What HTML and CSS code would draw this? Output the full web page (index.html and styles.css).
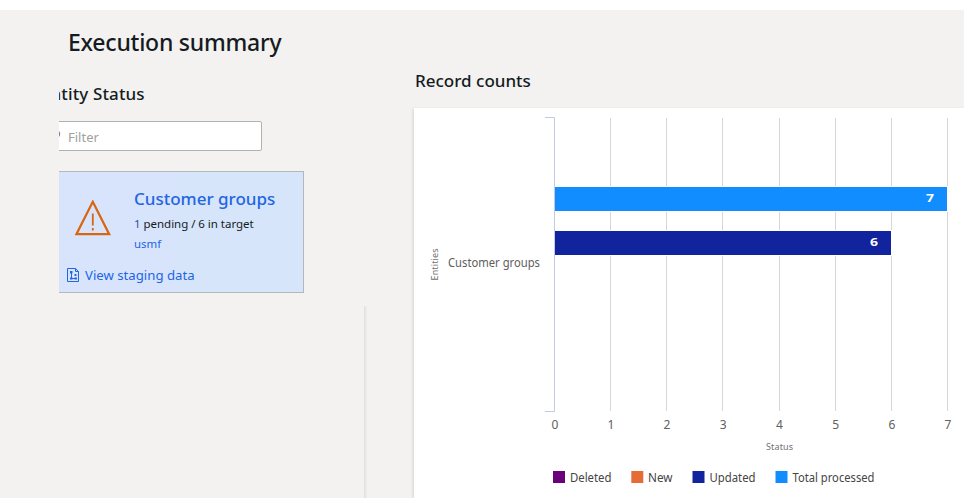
FILE: index.html
```html
<!DOCTYPE html>
<html lang="en">
<head>
<meta charset="utf-8">
<title>Execution summary</title>
<link rel="stylesheet" href="styles.css">
</head>
<body>
<main class="page">
  <section class="summary">
    <h1 class="title">Execution summary</h1>
    <div class="entities">
      <h2 class="heading entity-heading">Entity Status</h2>
      <div class="filter">
        <svg class="search" width="12" height="12" viewBox="0 0 12 12"><circle cx="7.3" cy="3" r="3.5"/><path d="M4.8 5.5L1 9"/></svg>
        <span>Filter</span>
      </div>
      <article class="card">
        <div class="card-main">
          <svg class="warning" width="36" height="36" viewBox="0 0 36 36">
            <path class="triangle" d="M17.8 1.8L1.4 34.2H34.2Z"/>
            <path class="mark" d="M17.8 13.5V25.5M17.8 28V30.5"/>
          </svg>
          <div class="card-text">
            <h3 class="card-title">Customer groups</h3>
            <p class="counts"><span class="pending">1</span> pending / 6 in target</p>
            <p class="company">usmf</p>
          </div>
        </div>
        <a class="staging">
          <svg width="13" height="14" viewBox="0 0 13 14"><path class="doc" d="M.5.5H8.5L11.5 3.5V13.5H.5ZM8.5.5V3.5H11.5"/><path class="doc" d="M4.5 5V10.5H8.5"/><path class="dots" d="M3 3H5.5V5.5H3ZM3 9.5H5.5V11.5H3ZM7.5 9.5H10V11.5H7.5ZM7.5 6H9.5V8H7.5Z"/></svg>
          <span>View staging data</span>
        </a>
      </article>
    </div>
    <div class="splitter"></div>
  </section>
  <section class="records">
    <h2 class="heading record-heading">Record counts</h2>
    <div class="chart">
      <svg width="550" height="390" viewBox="414 108 550 390">
        <path class="grid" d="M610.5 118V411M666.5 118V411M722.5 118V411M779.5 118V411M835.5 118V411M891.5 118V411M947.5 118V411"/>
        <path class="axis" d="M545 117.5H554.5V411.5H545"/>
        <g class="bars">
          <rect x="554" y="186" width="394" height="26" fill="#fff"/>
          <rect x="554" y="230" width="338" height="26" fill="#fff"/>
          <path class="axis" d="M554.5 185V257"/>
          <rect x="555" y="187" width="392" height="24" fill="#118dff"/>
          <rect x="555" y="231" width="336" height="24" fill="#12239e"/>
        </g>
        <g class="values">
          <text x="926" y="202" textLength="8" lengthAdjust="spacingAndGlyphs">7</text>
          <text x="870" y="246" textLength="8" lengthAdjust="spacingAndGlyphs">6</text>
        </g>
        <text class="label" x="448" y="267" textLength="92" lengthAdjust="spacingAndGlyphs">Customer groups</text>
        <text class="axis-title" transform="translate(438 280.5) rotate(-90)" textLength="32">Entities</text>
        <g class="ticks">
          <text x="555" y="429">0</text><text x="611" y="429">1</text><text x="667" y="429">2</text><text x="723.3" y="429">3</text>
          <text x="779.5" y="429">4</text><text x="835.7" y="429">5</text><text x="892" y="429">6</text><text x="948" y="429">7</text>
        </g>
        <text class="axis-title" x="766" y="450" textLength="27">Status</text>
        <rect x="553" y="471" width="12" height="12" fill="#6b007b"/>
        <rect x="631.3" y="471" width="12" height="12" fill="#e66c37"/>
        <rect x="692.5" y="471" width="12" height="12" fill="#12239e"/>
        <rect x="775.5" y="471" width="12" height="12" fill="#118dff"/>
        <g class="legend">
          <text x="570" y="482" textLength="41.5" lengthAdjust="spacingAndGlyphs">Deleted</text>
          <text x="648" y="482" textLength="24.5" lengthAdjust="spacingAndGlyphs">New</text>
          <text x="709.5" y="482" textLength="46" lengthAdjust="spacingAndGlyphs">Updated</text>
          <text x="792.5" y="482" textLength="82" lengthAdjust="spacingAndGlyphs">Total processed</text>
        </g>
      </svg>
    </div>
  </section>
</main>
</body>
</html>
```

FILE: styles.css
```css
* { box-sizing: border-box; }
body { margin: 0; background: #fff; font-family: "Noto Sans", "Open Sans", sans-serif; color: #151b1e; }
h1, h2, h3, p { margin: 0; font-weight: 500; white-space: nowrap; }
svg { display: block; flex: none; }

.page { display: flex; width: 964px; height: 488px; margin: 10px 0 4px; background: #f3f2f1; overflow: hidden; }
.summary { width: 414px; display: flex; flex-direction: column; }
.title { margin: 16px 0 1px 68px; font-size: 23px; line-height: 32px; letter-spacing: -.24px; }
.heading { font-size: 17px; line-height: 24px; }

.entities { width: 245px; margin: 23px 0 0 59px; overflow: hidden; }
.entity-heading { margin-left: -18px; letter-spacing: .12px; }
.filter { display: flex; align-items: center; gap: 7px; width: 223px; height: 30px; margin: 15px 0 0 -20px; padding: 2px 0 0 9px; border: 1px solid #b3b0ad; border-radius: 2px; background: #fff; color: #a19f9d; font-size: 13px; }
.search { fill: none; stroke: #777; stroke-width: 1; }

.card { width: 245px; height: 122px; margin-top: 20px; border: 1px solid #b3b8bc; border-left: 0; background: linear-gradient(90deg, #d8e4fc 0 50%, #d6e5f9 50% 100%); color: #2266e3; }
.card-main { display: flex; gap: 23px; padding: 15px 0 0 16px; }
.warning { margin-top: 13px; fill: none; }
.triangle { stroke: #d86510; stroke-width: 2.2; }
.mark { stroke: #d86510; stroke-width: 1.8; }
.card-title { font-size: 17px; line-height: 24px; }
.counts { margin-top: 3px; font-size: 11.5px; line-height: 20px; color: #151b1e; font-weight: 400; letter-spacing: -.03px; }
.pending { color: #25519f; }
.company { font-size: 11.4px; line-height: 20px; font-weight: 400; }
.staging { display: flex; align-items: center; gap: 5px; margin: 11px 0 0 8px; height: 20px; font-size: 13.2px; white-space: nowrap; }
.doc { fill: none; stroke: #2266e3; }
.dots { fill: #2266e3; }

.splitter { width: 3px; margin: 13px 0 0 364px; flex: 1; background: linear-gradient(90deg, #e1e0df, #f0efee); }

.records { width: 550px; }
.record-heading { margin: 59px 0 15px 1px; }
.chart { width: 550px; height: 390px; background: #fff; box-shadow: -1px 1px 3px rgba(0, 0, 0, .13); }
.grid { stroke: #d6d6d6; fill: none; }
.axis { stroke: #c0cbe2; fill: none; }
.values { fill: #fff; font-size: 11px; font-weight: 700; }
.label, .legend { font-size: 12px; fill: #605e5c; }
.legend { fill: #454545; }
.axis-title { font-size: 9px; fill: #707070; }
.ticks { font-size: 12px; fill: #606060; text-anchor: middle; }
```
